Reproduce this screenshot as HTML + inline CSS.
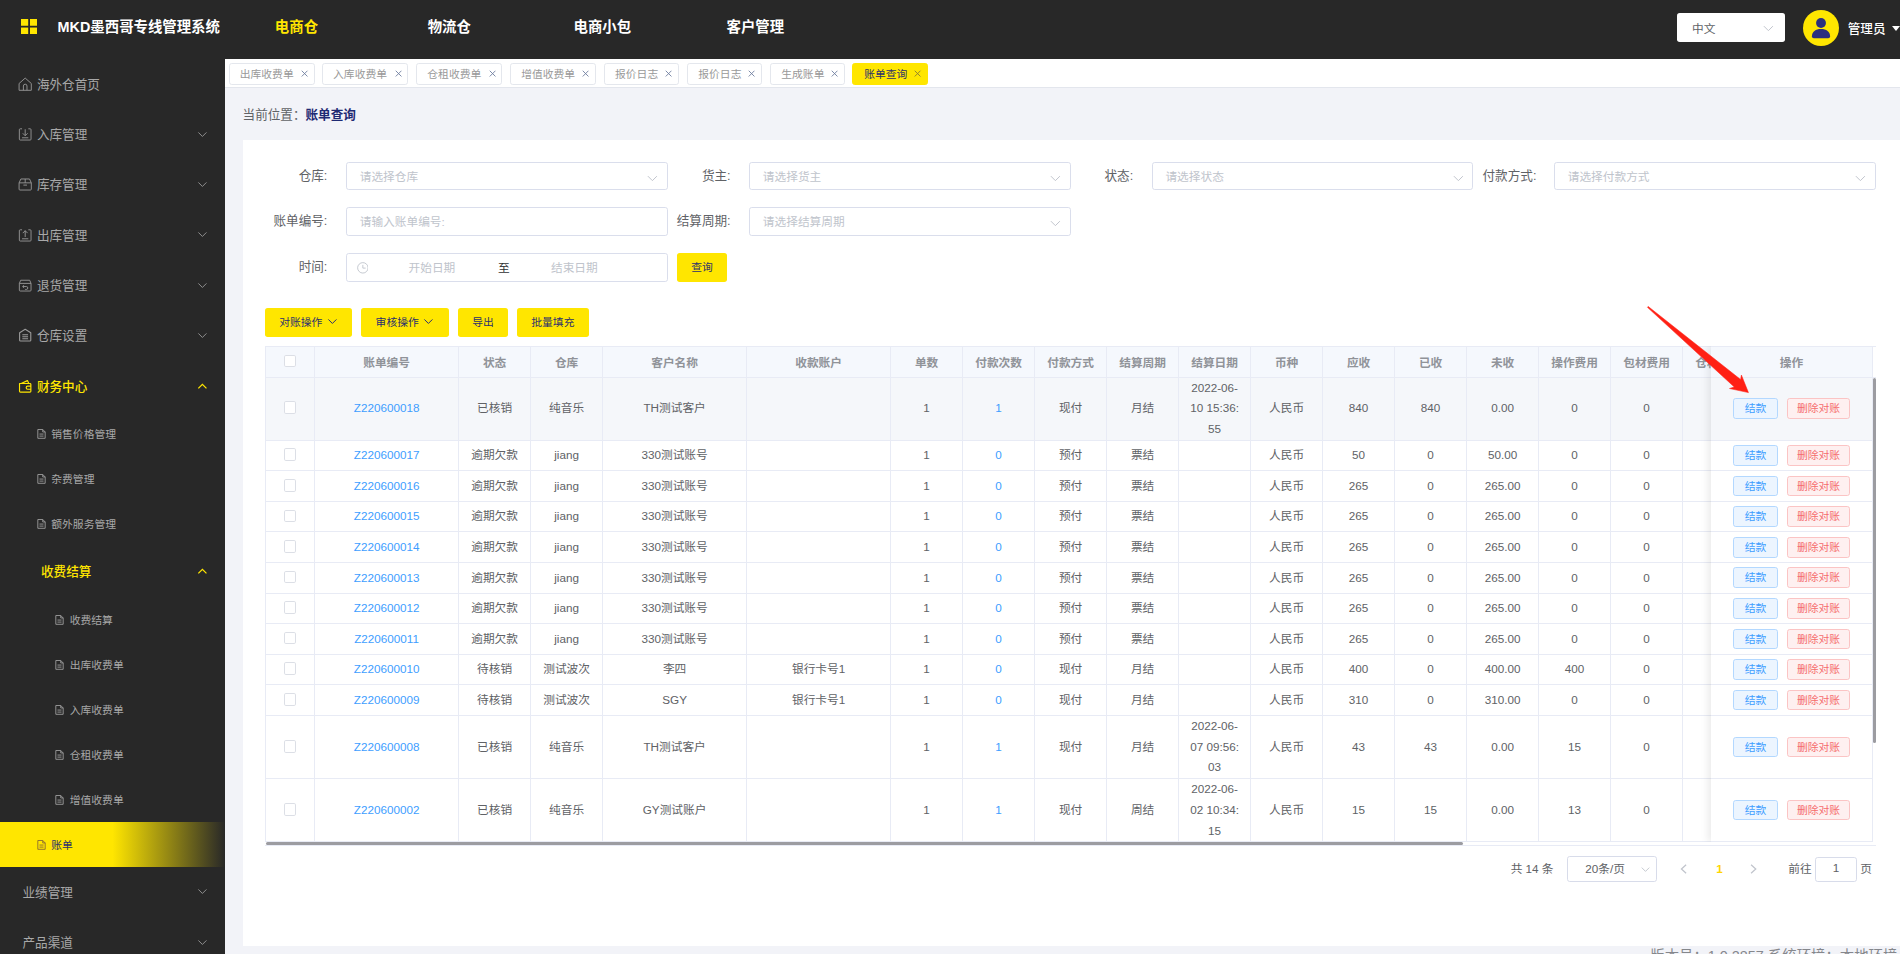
<!DOCTYPE html>
<html lang="zh-CN">
<head>
<meta charset="utf-8">
<title>MKD墨西哥专线管理系统</title>
<style>
html,body{margin:0;padding:0;overflow:hidden;background:#f2f3f8;}
body{font-family:"Liberation Sans","Noto Sans CJK SC",sans-serif;color:#606266;}
#app{zoom:0.9;position:relative;width:2111.2px;height:1060px;overflow:hidden;background:#f2f3f8;font-size:13px;}
#app *{box-sizing:border-box;}
.abs{position:absolute;}
/* header */
#hd{position:absolute;left:0;top:0;width:2111.2px;height:65px;background:#282828;}
#hd .logo{position:absolute;left:23px;top:21px;width:18px;height:17px;}
#hd .title{position:absolute;left:64px;top:0;height:60px;line-height:60px;font-size:16px;font-weight:bold;color:#fff;white-space:nowrap;}
#hd .nav{position:absolute;top:0;height:60px;line-height:60px;font-size:16px;font-weight:bold;color:#fff;width:170px;text-align:center;white-space:nowrap;}
#hd .nav.on{color:#ffe600;}
#hd .lang{position:absolute;left:1863px;top:14.5px;width:120px;height:32px;background:#fff;border-radius:3px;font-size:13px;color:#606266;line-height:34.5px;padding-left:17px;}
#hd .ava{position:absolute;left:2003.3px;top:10.9px;width:40px;height:40px;border-radius:50%;background:#ffe600;overflow:hidden;}
#hd .uname{position:absolute;left:2053px;top:0;height:65px;line-height:65px;font-size:14px;color:#fff;font-weight:500;white-space:nowrap;}
#hd .caret{position:absolute;left:2101.7px;top:28.9px;width:0;height:0;border-left:5.5px solid transparent;border-right:5.5px solid transparent;border-top:6.5px solid #fff;}
/* sidebar */
#sb{position:absolute;left:0;top:65px;width:250px;height:995px;background:#282828;color:#a8a8a8;font-size:14px;overflow:hidden;}
#sb .it{position:relative;height:56px;line-height:58px;padding-left:41px;white-space:nowrap;}
#sb .it svg.ic{position:absolute;left:20px;top:20px;width:16px;height:16px;}
#sb .it svg.ar{position:absolute;left:219px;top:22px;width:12px;height:12px;}
#sb .it.on{color:#ffe600;font-weight:500;}
#sb .s2{position:relative;height:50px;line-height:52px;font-size:12px;padding-left:57px;white-space:nowrap;}
#sb .s2 svg.ic{position:absolute;left:41.3px;top:20.2px;width:10px;height:10.9px;}
#sb .s3{position:relative;height:50px;line-height:52px;font-size:12px;padding-left:77.5px;white-space:nowrap;}
#sb .s3 svg.ic{position:absolute;left:61.3px;top:20.2px;width:10px;height:10.9px;}
#sb .act{background:linear-gradient(90deg,#ffe600 0%,#ffe600 50%,#282828 100%);color:#2b2f6e;}
/* tabs */
#tabs{position:absolute;left:250px;top:65px;width:1861.2px;height:33px;background:#fff;border-bottom:1px solid #e3e6ed;}
#tabs .tb{position:absolute;top:5px;height:24px;line-height:23.4px;border:1px solid #e4e7ed;border-radius:3px;font-size:12px;color:#999;padding-left:11px;white-space:nowrap;background:#fff;}
#tabs .tb svg{position:absolute;right:6px;top:7px;width:8px;height:8px;}
#tabs .tb.on{background:#ffe600;border-color:#ffe600;color:#2b2f6e;}
/* breadcrumb */
#bc{position:absolute;left:269.5px;top:113.3px;height:30px;line-height:30px;font-size:14px;color:#606266;white-space:nowrap;}
#bc b{color:#1f2a73;margin-left:0;}
/* card */
#card{position:absolute;left:270px;top:155.5px;width:1841.2px;height:895.5px;background:#fff;}
.lbl{position:absolute;height:32px;line-height:32px;font-size:14px;color:#606266;text-align:right;width:120px;white-space:nowrap;}
.inp{position:absolute;width:357px;height:31.5px;border:1px solid #dadeec;border-radius:3px;background:#fff;font-size:13px;color:#c0c4cc;line-height:30px;padding-left:13.8px;white-space:nowrap;}
.inp svg.ch{position:absolute;right:10px;top:10.5px;width:12px;height:12px;}
.ybtn{position:absolute;height:32px;line-height:32px;background:#ffe600;border-radius:3px;color:#2b2f6e;font-size:12px;text-align:center;white-space:nowrap;}
.ybtn svg{display:inline-block;vertical-align:-1px;margin-left:5px;width:12px;height:12px;}
/* table */
#tw{position:absolute;left:294px;top:384.0px;width:1790.5px;height:556px;overflow:hidden;}
#tw .scr{position:absolute;left:0;top:0;width:1790.5px;height:552px;overflow:hidden;border-left:1px solid #e8ebf5;border-top:1px solid #e8ebf5;}
#tw table{border-collapse:separate;border-spacing:0;table-layout:fixed;width:1735px;font-size:13px;color:#606266;}
#tw th,#tw td{border-right:1px solid #e8ebf5;border-bottom:1px solid #e8ebf5;text-align:center;padding:0;overflow:hidden;white-space:nowrap;line-height:23px;vertical-align:middle;}
#tw th{background:#f5f8fd;color:#909399;font-weight:bold;height:34.44px;padding-top:4px;}
#tw th .cb{position:relative;top:-1.5px;}
#tw td{height:34px;background:#fff;}
#tw tr.tall td{height:70px;}
#tw tr.hov td{background:#f5f7fa;}
#tw a{color:#409eff;}
.cb{display:inline-block;width:14px;height:14px;border:1px solid #dcdfe6;border-radius:2px;background:#fff;vertical-align:-2px;}
#fxw{position:absolute;left:1587.2px;top:0;width:200px;height:551.6px;overflow:hidden;}
#tbb{position:absolute;left:0;top:554.9px;width:1790.5px;height:1px;background:#e8ebf5;}
#hgl{position:absolute;left:1787.2px;top:34.9px;width:3.3px;height:1px;background:#e8ebf5;}
#fx{position:absolute;left:20px;top:0;width:180px;height:552px;background:#fff;box-shadow:-3px 0 9px rgba(0,0,0,.085);border-top:1px solid #e8ebf5;}
#fx .fh{height:34.44px;line-height:34.5px;background:#f5f8fd;color:#909399;font-weight:bold;text-align:center;border-bottom:1px solid #e8ebf5;border-right:1px solid #e8ebf5;font-size:13px;}
#fx .fr{position:relative;height:34px;border-bottom:1px solid #e8ebf5;border-right:1px solid #e8ebf5;background:#fff;}
#fx .fr.tall{height:70px;}
#fx .fr.hov{background:#f5f7fa;}
#fx .b1,#fx .b2{position:absolute;top:50%;margin-top:-11.5px;height:23px;line-height:21px;border-radius:3px;font-size:12px;text-align:center;white-space:nowrap;}
#fx .b1{left:24.3px;width:50.2px;background:#ecf5ff;border:1px solid #b3d8ff;color:#409eff;}
#fx .b2{left:84.3px;width:70.3px;background:#fef0f0;border:1px solid #fbc4c4;color:#f56c6c;}
#vsb{position:absolute;left:1787.2px;top:36.2px;width:3.3px;height:405.5px;background:#9c9ca1;border-radius:2px;}
#hsb{position:absolute;left:1.2px;top:551.7px;width:1330px;height:3.3px;background:#9c9ca1;border-radius:2px;}
/* pagination */
#pg{position:absolute;left:0;top:0;font-size:13px;color:#606266;}
#pg .t{position:absolute;white-space:nowrap;height:28px;line-height:28px;}
#pg .box{position:absolute;height:28px;border:1px solid #d8dcea;border-radius:3px;background:#fff;line-height:26px;text-align:center;}
#ft{position:absolute;left:250px;top:1051px;width:1861.2px;height:20px;background:#f2f3f8;font-size:16px;color:#85878c;text-align:right;padding-right:3px;line-height:24px;white-space:nowrap;}
</style>
</head>
<body>
<div id="app">

<div id="hd">
  <svg class="logo" viewBox="0 0 18 17"><rect x="0" y="0" width="8" height="7.5" fill="#ffe600"/><rect x="10" y="0" width="8" height="7.5" fill="#ffe600"/><rect x="0" y="9.5" width="8" height="7.5" fill="#ffe600"/><rect x="10" y="9.5" width="8" height="7.5" fill="#ffe600"/></svg>
  <div class="title">MKD墨西哥专线管理系统</div>
  <div class="nav on" style="left:244.4px">电商仓</div>
  <div class="nav" style="left:414.2px">物流仓</div>
  <div class="nav" style="left:584.3px">电商小包</div>
  <div class="nav" style="left:754.3px">客户管理</div>
  <div class="lang">中文<svg style="position:absolute;right:12px;top:11.5px;width:12px;height:12px" viewBox="0 0 12 12"><path d="M1 3.5 L6 8.5 L11 3.5" fill="none" stroke="#c0c4cc" stroke-width="1.1"/></svg></div>
  <div class="ava"><svg viewBox="0 0 40 40" width="40" height="40"><circle cx="20" cy="14.5" r="5.5" fill="#2b2f7e"/><path d="M9.9 29.2 C9.9 24 14 21.1 20 21.1 C26 21.1 30.1 24 30.1 29.2 q0 2.1 -2.1 2.1 H12 q-2.1 0 -2.1 -2.1 z" fill="#2b2f7e"/></svg></div>
  <div class="uname">管理员</div>
  <div class="caret"></div>
</div>

<div id="sb">
  <div class="it"><svg class="ic" viewBox="0 0 16 16"><path d="M1.2 7.2 L8 1.2 L14.8 7.2 V14.8 H1.2 Z M6 14.8 V10 a2 2 0 0 1 4 0 V14.8" fill="none" stroke="#9a9a9a" stroke-width="1" stroke-linejoin="round"/></svg>海外仓首页</div>
  <div class="it"><svg class="ic" viewBox="0 0 16 16"><path d="M4.5 2 H2.5 a1 1 0 0 0 -1 1 V13.5 a1 1 0 0 0 1 1 H13.5 a1 1 0 0 0 1 -1 V3 a1 1 0 0 0 -1 -1 H11.5 M8 2.5 V9.5 M5.3 7 L8 9.7 L10.7 7 M4.5 12 H11.5" fill="none" stroke="#9a9a9a" stroke-width="1"/></svg>入库管理<svg class="ar" viewBox="0 0 12 12"><path d="M1.5 3.8 L6 8.3 L10.5 3.8" fill="none" stroke="#9a9a9a" stroke-width="1"/></svg></div>
  <div class="it"><svg class="ic" viewBox="0 0 16 16"><path d="M1.2 6.5 L3.2 2.2 H12.8 L14.8 6.5 V13.5 a1 1 0 0 1 -1 1 H2.2 a1 1 0 0 1 -1 -1 Z M1.2 6.5 H14.8 M8 2.2 V6.5 M6 9 H10" fill="none" stroke="#9a9a9a" stroke-width="1" stroke-linejoin="round"/></svg>库存管理<svg class="ar" viewBox="0 0 12 12"><path d="M1.5 3.8 L6 8.3 L10.5 3.8" fill="none" stroke="#9a9a9a" stroke-width="1"/></svg></div>
  <div class="it"><svg class="ic" viewBox="0 0 16 16"><path d="M4.5 2 H2.5 a1 1 0 0 0 -1 1 V13.5 a1 1 0 0 0 1 1 H13.5 a1 1 0 0 0 1 -1 V3 a1 1 0 0 0 -1 -1 H11.5 M8 10 V3 M5.3 5.7 L8 3 L10.7 5.7 M4.5 12 H11.5" fill="none" stroke="#9a9a9a" stroke-width="1"/></svg>出库管理<svg class="ar" viewBox="0 0 12 12"><path d="M1.5 3.8 L6 8.3 L10.5 3.8" fill="none" stroke="#9a9a9a" stroke-width="1"/></svg></div>
  <div class="it"><svg class="ic" viewBox="0 0 16 16"><path d="M1.5 6 L3 2.5 H13 L14.5 6 V13.5 a1 1 0 0 1 -1 1 H2.5 a1 1 0 0 1 -1 -1 Z M1.5 6 H14.5 M6.8 8 L5.2 9.5 L6.8 11 M5.2 9.5 H9.3 a1.6 1.6 0 0 1 0 3.2 H8" fill="none" stroke="#9a9a9a" stroke-width="1" stroke-linejoin="round"/></svg>退货管理<svg class="ar" viewBox="0 0 12 12"><path d="M1.5 3.8 L6 8.3 L10.5 3.8" fill="none" stroke="#9a9a9a" stroke-width="1"/></svg></div>
  <div class="it"><svg class="ic" viewBox="0 0 16 16"><path d="M1.8 5.2 L8 1.5 L14.2 5.2 V13.5 a1 1 0 0 1 -1 1 H2.8 a1 1 0 0 1 -1 -1 Z M4.8 7.5 H11.2 M4.8 9.7 H11.2 M4.8 11.9 H11.2" fill="none" stroke="#9a9a9a" stroke-width="1.25" stroke-linejoin="round"/></svg>仓库设置<svg class="ar" viewBox="0 0 12 12"><path d="M1.5 3.8 L6 8.3 L10.5 3.8" fill="none" stroke="#9a9a9a" stroke-width="1"/></svg></div>
  <div class="it on"><svg class="ic" viewBox="0 0 16 16"><path d="M1.7 5 H13.3 a1 1 0 0 1 1 1 V13.5 a1 1 0 0 1 -1 1 H2.7 a1 1 0 0 1 -1 -1 Z M3.5 5 L10.5 1.8 L12 5 M14.3 8 H10.8 a1.7 1.7 0 0 0 0 3.4 H14.3" fill="none" stroke="#ffe600" stroke-width="1.3" stroke-linejoin="round"/></svg>财务中心<svg class="ar" viewBox="0 0 12 12"><path d="M1.5 8.2 L6 3.7 L10.5 8.2" fill="none" stroke="#ffe600" stroke-width="1.4"/></svg></div>
  <div class="s2"><svg class="ic" viewBox="0 0 11 12"><path d="M1 0.6 H7 L10 3.6 V11.4 H1 Z M7 0.6 V3.6 H10 M3 6.2 H8 M3 8.7 H8" fill="none" stroke="#9f9f9f" stroke-width="1.1"/></svg>销售价格管理</div>
  <div class="s2"><svg class="ic" viewBox="0 0 11 12"><path d="M1 0.6 H7 L10 3.6 V11.4 H1 Z M7 0.6 V3.6 H10 M3 6.2 H8 M3 8.7 H8" fill="none" stroke="#9f9f9f" stroke-width="1.1"/></svg>杂费管理</div>
  <div class="s2"><svg class="ic" viewBox="0 0 11 12"><path d="M1 0.6 H7 L10 3.6 V11.4 H1 Z M7 0.6 V3.6 H10 M3 6.2 H8 M3 8.7 H8" fill="none" stroke="#9f9f9f" stroke-width="1.1"/></svg>额外服务管理</div>
  <div class="it on" style="padding-left:45.5px">收费结算<svg class="ar" viewBox="0 0 12 12"><path d="M1.5 8.2 L6 3.7 L10.5 8.2" fill="none" stroke="#ffe600" stroke-width="1.4"/></svg></div>
  <div class="s3"><svg class="ic" viewBox="0 0 11 12"><path d="M1 0.6 H7 L10 3.6 V11.4 H1 Z M7 0.6 V3.6 H10 M3 6.2 H8 M3 8.7 H8" fill="none" stroke="#9f9f9f" stroke-width="1.1"/></svg>收费结算</div>
  <div class="s3"><svg class="ic" viewBox="0 0 11 12"><path d="M1 0.6 H7 L10 3.6 V11.4 H1 Z M7 0.6 V3.6 H10 M3 6.2 H8 M3 8.7 H8" fill="none" stroke="#9f9f9f" stroke-width="1.1"/></svg>出库收费单</div>
  <div class="s3"><svg class="ic" viewBox="0 0 11 12"><path d="M1 0.6 H7 L10 3.6 V11.4 H1 Z M7 0.6 V3.6 H10 M3 6.2 H8 M3 8.7 H8" fill="none" stroke="#9f9f9f" stroke-width="1.1"/></svg>入库收费单</div>
  <div class="s3"><svg class="ic" viewBox="0 0 11 12"><path d="M1 0.6 H7 L10 3.6 V11.4 H1 Z M7 0.6 V3.6 H10 M3 6.2 H8 M3 8.7 H8" fill="none" stroke="#9f9f9f" stroke-width="1.1"/></svg>仓租收费单</div>
  <div class="s3"><svg class="ic" viewBox="0 0 11 12"><path d="M1 0.6 H7 L10 3.6 V11.4 H1 Z M7 0.6 V3.6 H10 M3 6.2 H8 M3 8.7 H8" fill="none" stroke="#9f9f9f" stroke-width="1.1"/></svg>增值收费单</div>
  <div class="s2 act"><svg class="ic" viewBox="0 0 11 12"><path d="M1 0.6 H7 L10 3.6 V11.4 H1 Z M7 0.6 V3.6 H10 M3 6.2 H8 M3 8.7 H8" fill="none" stroke="#8a6a30" stroke-width="1.1"/></svg>账单</div>
  <div class="it" style="padding-left:25px">业绩管理<svg class="ar" viewBox="0 0 12 12"><path d="M1.5 3.8 L6 8.3 L10.5 3.8" fill="none" stroke="#9a9a9a" stroke-width="1"/></svg></div>
  <div class="it" style="padding-left:25px">产品渠道<svg class="ar" viewBox="0 0 12 12"><path d="M1.5 3.8 L6 8.3 L10.5 3.8" fill="none" stroke="#9a9a9a" stroke-width="1"/></svg></div>
</div>

<div id="tabs">
  <div class="tb" style="left:4.3px;width:95.7px">出库收费单<svg viewBox="0 0 8 8"><path d="M0.8 0.8 L7.2 7.2 M7.2 0.8 L0.8 7.2" stroke="#6f7f9f" stroke-width="1" fill="none"/></svg></div>
  <div class="tb" style="left:108px;width:95.5px">入库收费单<svg viewBox="0 0 8 8"><path d="M0.8 0.8 L7.2 7.2 M7.2 0.8 L0.8 7.2" stroke="#6f7f9f" stroke-width="1" fill="none"/></svg></div>
  <div class="tb" style="left:212.7px;width:95.5px">仓租收费单<svg viewBox="0 0 8 8"><path d="M0.8 0.8 L7.2 7.2 M7.2 0.8 L0.8 7.2" stroke="#6f7f9f" stroke-width="1" fill="none"/></svg></div>
  <div class="tb" style="left:317px;width:95px">增值收费单<svg viewBox="0 0 8 8"><path d="M0.8 0.8 L7.2 7.2 M7.2 0.8 L0.8 7.2" stroke="#6f7f9f" stroke-width="1" fill="none"/></svg></div>
  <div class="tb" style="left:421.3px;width:83px">报价日志<svg viewBox="0 0 8 8"><path d="M0.8 0.8 L7.2 7.2 M7.2 0.8 L0.8 7.2" stroke="#6f7f9f" stroke-width="1" fill="none"/></svg></div>
  <div class="tb" style="left:513.8px;width:82.5px">报价日志<svg viewBox="0 0 8 8"><path d="M0.8 0.8 L7.2 7.2 M7.2 0.8 L0.8 7.2" stroke="#6f7f9f" stroke-width="1" fill="none"/></svg></div>
  <div class="tb" style="left:606px;width:82.6px">生成账单<svg viewBox="0 0 8 8"><path d="M0.8 0.8 L7.2 7.2 M7.2 0.8 L0.8 7.2" stroke="#6f7f9f" stroke-width="1" fill="none"/></svg></div>
  <div class="tb on" style="left:696.6px;width:84.4px;padding-left:12.6px">账单查询<svg viewBox="0 0 8 8"><path d="M0.8 0.8 L7.2 7.2 M7.2 0.8 L0.8 7.2" stroke="#8a7a30" stroke-width="1" fill="none"/></svg></div>
</div>

<div id="bc">当前位置：<b>账单查询</b></div>

<div id="card"></div>

<!-- form -->
<div class="lbl" style="left:243.7px;top:180px">仓库:</div>
<div class="inp" style="left:384.8px;top:180.2px;height:30.6px;line-height:31px">请选择仓库<svg class="ch" viewBox="0 0 12 12"><path d="M1 3.5 L6 8.5 L11 3.5" fill="none" stroke="#c0c4cc" stroke-width="1.1"/></svg></div>
<div class="lbl" style="left:691.8px;top:180px">货主:</div>
<div class="inp" style="left:832.7px;top:180.2px;height:30.6px;line-height:31px">请选择货主<svg class="ch" viewBox="0 0 12 12"><path d="M1 3.5 L6 8.5 L11 3.5" fill="none" stroke="#c0c4cc" stroke-width="1.1"/></svg></div>
<div class="lbl" style="left:1139.1px;top:180px">状态:</div>
<div class="inp" style="left:1280px;top:180.2px;height:30.6px;line-height:31px">请选择状态<svg class="ch" viewBox="0 0 12 12"><path d="M1 3.5 L6 8.5 L11 3.5" fill="none" stroke="#c0c4cc" stroke-width="1.1"/></svg></div>
<div class="lbl" style="left:1587.1px;top:180px">付款方式:</div>
<div class="inp" style="left:1727px;top:180.2px;height:30.6px;line-height:31px">请选择付款方式<svg class="ch" viewBox="0 0 12 12"><path d="M1 3.5 L6 8.5 L11 3.5" fill="none" stroke="#c0c4cc" stroke-width="1.1"/></svg></div>

<div class="lbl" style="left:243.7px;top:230px">账单编号:</div>
<div class="inp" style="left:384.8px;top:230.2px">请输入账单编号:</div>
<div class="lbl" style="left:691.8px;top:230px">结算周期:</div>
<div class="inp" style="left:832.7px;top:230.2px">请选择结算周期<svg class="ch" viewBox="0 0 12 12"><path d="M1 3.5 L6 8.5 L11 3.5" fill="none" stroke="#c0c4cc" stroke-width="1.1"/></svg></div>

<div class="lbl" style="left:243.7px;top:281px">时间:</div>
<div class="inp" style="left:384.8px;top:281.5px;padding-left:0">
  <svg style="position:absolute;left:10.5px;top:9px;width:13px;height:13px" viewBox="0 0 13 13"><circle cx="6.5" cy="6.5" r="5.8" fill="none" stroke="#c0c4cc" stroke-width="1"/><path d="M6.5 3.2 V6.8 H9.6" fill="none" stroke="#c0c4cc" stroke-width="1"/></svg>
  <span style="position:absolute;left:68px;top:0">开始日期</span>
  <span style="position:absolute;left:167.3px;top:0;color:#303133">至</span>
  <span style="position:absolute;left:226.3px;top:0">结束日期</span>
</div>
<div class="ybtn" style="left:752.1px;top:281.5px;width:56px;height:31.5px;line-height:31.5px">查询</div>

<div class="ybtn" style="left:294.2px;top:342.5px;width:97px">对账操作<svg viewBox="0 0 12 12"><path d="M1.5 3.8 L6 8.3 L10.5 3.8" fill="none" stroke="#2b2f6e" stroke-width="1.1"/></svg></div>
<div class="ybtn" style="left:401.1px;top:342.5px;width:97.4px">审核操作<svg viewBox="0 0 12 12"><path d="M1.5 3.8 L6 8.3 L10.5 3.8" fill="none" stroke="#2b2f6e" stroke-width="1.1"/></svg></div>
<div class="ybtn" style="left:508.9px;top:342.5px;width:55.4px">导出</div>
<div class="ybtn" style="left:574.4px;top:342.5px;width:79.8px">批量填充</div>

<!-- table -->
<div id="tw">
  <div class="scr">
    <table>
<colgroup><col style="width:55px"><col style="width:160px"><col style="width:80px"><col style="width:80px"><col style="width:160px"><col style="width:160px"><col style="width:80px"><col style="width:80px"><col style="width:80px"><col style="width:80px"><col style="width:80px"><col style="width:80px"><col style="width:80px"><col style="width:80px"><col style="width:80px"><col style="width:80px"><col style="width:80px"><col style="width:80px"><col style="width:80px"></colgroup>
<tr class="hd"><th><span class="cb"></span></th><th>账单编号</th><th>状态</th><th>仓库</th><th>客户名称</th><th>收款账户</th><th>单数</th><th>付款次数</th><th>付款方式</th><th>结算周期</th><th>结算日期</th><th>币种</th><th>应收</th><th>已收</th><th>未收</th><th>操作费用</th><th>包材费用</th><th>仓租费用</th><th>增值费用</th></tr>
<tr class="tall hov"><td><span class="cb"></span></td><td><a>Z220600018</a></td><td>已核销</td><td>纯音乐</td><td>TH测试客户</td><td></td><td>1</td><td><a>1</a></td><td>现付</td><td>月结</td><td class="dt">2022-06-<br>10 15:36:<br>55</td><td>人民币</td><td>840</td><td>840</td><td>0.00</td><td>0</td><td>0</td><td>0</td><td>0</td></tr>
<tr class=""><td><span class="cb"></span></td><td><a>Z220600017</a></td><td>逾期欠款</td><td>jiang</td><td>330测试账号</td><td></td><td>1</td><td><a>0</a></td><td>预付</td><td>票结</td><td class="dt"></td><td>人民币</td><td>50</td><td>0</td><td>50.00</td><td>0</td><td>0</td><td>0</td><td>0</td></tr>
<tr class=""><td><span class="cb"></span></td><td><a>Z220600016</a></td><td>逾期欠款</td><td>jiang</td><td>330测试账号</td><td></td><td>1</td><td><a>0</a></td><td>预付</td><td>票结</td><td class="dt"></td><td>人民币</td><td>265</td><td>0</td><td>265.00</td><td>0</td><td>0</td><td>0</td><td>0</td></tr>
<tr class=""><td><span class="cb"></span></td><td><a>Z220600015</a></td><td>逾期欠款</td><td>jiang</td><td>330测试账号</td><td></td><td>1</td><td><a>0</a></td><td>预付</td><td>票结</td><td class="dt"></td><td>人民币</td><td>265</td><td>0</td><td>265.00</td><td>0</td><td>0</td><td>0</td><td>0</td></tr>
<tr class=""><td><span class="cb"></span></td><td><a>Z220600014</a></td><td>逾期欠款</td><td>jiang</td><td>330测试账号</td><td></td><td>1</td><td><a>0</a></td><td>预付</td><td>票结</td><td class="dt"></td><td>人民币</td><td>265</td><td>0</td><td>265.00</td><td>0</td><td>0</td><td>0</td><td>0</td></tr>
<tr class=""><td><span class="cb"></span></td><td><a>Z220600013</a></td><td>逾期欠款</td><td>jiang</td><td>330测试账号</td><td></td><td>1</td><td><a>0</a></td><td>预付</td><td>票结</td><td class="dt"></td><td>人民币</td><td>265</td><td>0</td><td>265.00</td><td>0</td><td>0</td><td>0</td><td>0</td></tr>
<tr class=""><td><span class="cb"></span></td><td><a>Z220600012</a></td><td>逾期欠款</td><td>jiang</td><td>330测试账号</td><td></td><td>1</td><td><a>0</a></td><td>预付</td><td>票结</td><td class="dt"></td><td>人民币</td><td>265</td><td>0</td><td>265.00</td><td>0</td><td>0</td><td>0</td><td>0</td></tr>
<tr class=""><td><span class="cb"></span></td><td><a>Z220600011</a></td><td>逾期欠款</td><td>jiang</td><td>330测试账号</td><td></td><td>1</td><td><a>0</a></td><td>预付</td><td>票结</td><td class="dt"></td><td>人民币</td><td>265</td><td>0</td><td>265.00</td><td>0</td><td>0</td><td>0</td><td>0</td></tr>
<tr class=""><td><span class="cb"></span></td><td><a>Z220600010</a></td><td>待核销</td><td>测试波次</td><td>李四</td><td>银行卡号1</td><td>1</td><td><a>0</a></td><td>现付</td><td>月结</td><td class="dt"></td><td>人民币</td><td>400</td><td>0</td><td>400.00</td><td>400</td><td>0</td><td>0</td><td>0</td></tr>
<tr class=""><td><span class="cb"></span></td><td><a>Z220600009</a></td><td>待核销</td><td>测试波次</td><td>SGY</td><td>银行卡号1</td><td>1</td><td><a>0</a></td><td>现付</td><td>月结</td><td class="dt"></td><td>人民币</td><td>310</td><td>0</td><td>310.00</td><td>0</td><td>0</td><td>0</td><td>0</td></tr>
<tr class="tall"><td><span class="cb"></span></td><td><a>Z220600008</a></td><td>已核销</td><td>纯音乐</td><td>TH测试客户</td><td></td><td>1</td><td><a>1</a></td><td>现付</td><td>月结</td><td class="dt">2022-06-<br>07 09:56:<br>03</td><td>人民币</td><td>43</td><td>43</td><td>0.00</td><td>15</td><td>0</td><td>0</td><td>0</td></tr>
<tr class="tall"><td><span class="cb"></span></td><td><a>Z220600002</a></td><td>已核销</td><td>纯音乐</td><td>GY测试账户</td><td></td><td>1</td><td><a>1</a></td><td>现付</td><td>周结</td><td class="dt">2022-06-<br>02 10:34:<br>15</td><td>人民币</td><td>15</td><td>15</td><td>0.00</td><td>13</td><td>0</td><td>0</td><td>0</td></tr>
    </table>
  </div>
  <div id="fxw"><div id="fx">
<div class="fh">操作</div>
<div class="fr tall hov"><span class="b1">结款</span><span class="b2">删除对账</span></div>
<div class="fr"><span class="b1">结款</span><span class="b2">删除对账</span></div>
<div class="fr"><span class="b1">结款</span><span class="b2">删除对账</span></div>
<div class="fr"><span class="b1">结款</span><span class="b2">删除对账</span></div>
<div class="fr"><span class="b1">结款</span><span class="b2">删除对账</span></div>
<div class="fr"><span class="b1">结款</span><span class="b2">删除对账</span></div>
<div class="fr"><span class="b1">结款</span><span class="b2">删除对账</span></div>
<div class="fr"><span class="b1">结款</span><span class="b2">删除对账</span></div>
<div class="fr"><span class="b1">结款</span><span class="b2">删除对账</span></div>
<div class="fr"><span class="b1">结款</span><span class="b2">删除对账</span></div>
<div class="fr tall"><span class="b1">结款</span><span class="b2">删除对账</span></div>
<div class="fr tall"><span class="b1">结款</span><span class="b2">删除对账</span></div>
  </div></div>
  <div id="tbb"></div><div id="hgl"></div>
  <div id="vsb"></div>
  <div id="hsb"></div>
</div>

<!-- arrow -->
<svg class="abs" style="left:1800px;top:320px;width:180px;height:140px;overflow:visible" viewBox="1800 320 180 140">
  <polygon points="1830.5,341.5 1927.0,430.0 1921.7,431.7 1942.7,436.2 1934.9,416.7 1934.0,421.7 1831.3,340.5" fill="#ff2014" stroke="#ff2014" stroke-width="0.6" stroke-linejoin="round"/>
</svg>

<!-- pagination -->
<div id="pg">
  <div class="t" style="left:1678.5px;top:951px">共 14 条</div>
  <div class="box" style="left:1741.4px;top:951.5px;width:99.5px;text-align:left;padding-left:19px">20条/页<svg style="position:absolute;right:7px;top:8.5px;width:10px;height:10px" viewBox="0 0 12 12"><path d="M1 3.5 L6 8.5 L11 3.5" fill="none" stroke="#c0c4cc" stroke-width="1.2"/></svg></div>
  <svg class="abs" style="left:1867px;top:960px;width:8px;height:11px" viewBox="0 0 8 11"><path d="M6.8 0.8 L1.6 5.5 L6.8 10.2" fill="none" stroke="#c0c4cc" stroke-width="1.4"/></svg>
  <div class="t" style="left:1900.5px;top:951px;width:20px;text-align:center;color:#ffd500;font-weight:bold">1</div>
  <svg class="abs" style="left:1944.5px;top:960px;width:8px;height:11px" viewBox="0 0 8 11"><path d="M1.2 0.8 L6.4 5.5 L1.2 10.2" fill="none" stroke="#c0c4cc" stroke-width="1.4"/></svg>
  <div class="t" style="left:1987px;top:951px">前往</div>
  <div class="box" style="left:2017px;top:952.5px;width:46px;height:27px;line-height:23px">1</div>
  <div class="t" style="left:2067px;top:951px">页</div>
</div>

<div id="ft">版本号：1.0.2857 系统环境：本地环境</div>

</div>
</body>
</html>
